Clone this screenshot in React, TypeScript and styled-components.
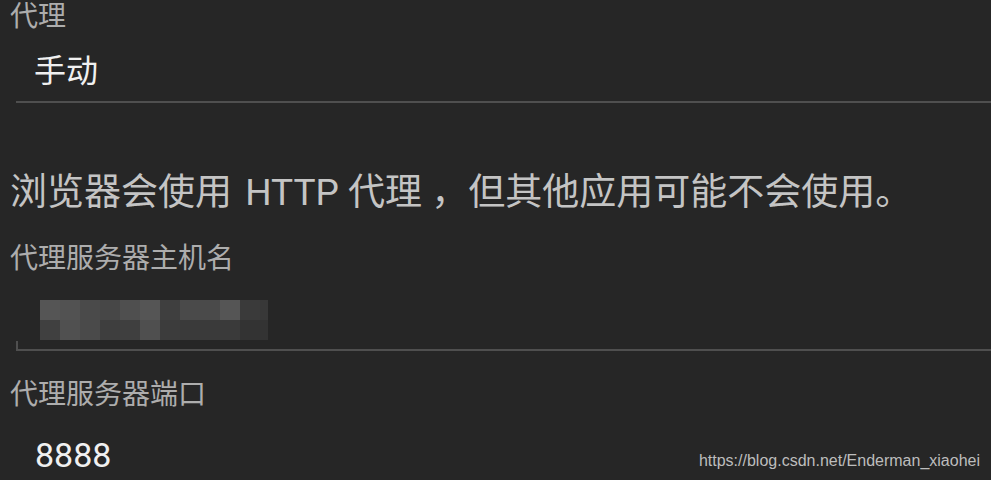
import styled, { createGlobalStyle } from 'styled-components'

const GlobalStyle = createGlobalStyle`
  html, body {
    margin: 0;
    padding: 0;
    background: #262626;
  }
  body {
    font-family: Roboto, "Noto Sans CJK SC", "Noto Sans", sans-serif;
  }
`

const mosaic = [
  ['#555555', '#525252', '#4a4a4a', '#474747', '#4f4f4f', '#555555', '#3f3f3f', '#4a4a4a', '#4a4a4a', '#555555', '#3a3a3a', '#383838'],
  ['#404040', '#505050', '#4a4a4a', '#3e3e3e', '#3f3f3f', '#4f4f4f', '#3c3c3c', '#3a3a3a', '#3a3a3a', '#3a3a3a', '#333333', '#333333'],
]

export default function App() {
  return (
    <>
      <GlobalStyle />
      <Screen>
        <Label $height={33}>代理</Label>
        <Spinner>
          <Value $size={32} $height={42}>手动</Value>
        </Spinner>
        <Notice>
          浏览器会使用 <Term>HTTP</Term> 代理 ，但其他应用可能不会使用。
        </Notice>
        <Label $height={36} $top={23}>代理服务器主机名</Label>
        <EditText>
          <Mosaic width="228" height="40" viewBox="0 0 228 40">
            {mosaic.map((row, r) =>
              row.map((fill, c) => (
                <rect key={`${r}-${c}`} x={c * 20} y={r * 20} width={c === 11 ? 8 : 20} height={20} fill={fill} />
              )),
            )}
          </Mosaic>
        </EditText>
        <Label $height={36} $top={26}>代理服务器端口</Label>
        <PortField>
          <Value $size={34} $height={44}>8888</Value>
        </PortField>
        <Watermark>https://blog.csdn.net/Enderman_xiaohei</Watermark>
      </Screen>
    </>
  )
}

const Screen = styled.div`
  position: relative;
  display: flex;
  flex-direction: column;
  width: 991px;
  height: 480px;
  padding-left: 10px;
  box-sizing: border-box;
  overflow: hidden;
`
const Label = styled.div<{ $height: number; $top?: number }>`
  margin-top: ${(p) => p.$top ?? 0}px;
  height: ${(p) => p.$height}px;
  line-height: ${(p) => p.$height}px;
  font-size: 28px;
  color: #adadad;
  white-space: nowrap;
`
const Spinner = styled.div`
  margin-left: 6px;
  padding: 17px 0 9px 18px;
  border-bottom: 2px solid #4f4f4f;
`
const Value = styled.div<{ $size: number; $height: number }>`
  font-size: ${(p) => p.$size}px;
  line-height: ${(p) => p.$height}px;
  height: ${(p) => p.$height}px;
  color: #f0f0f0;
`
const Notice = styled.div`
  margin-top: 65px;
  height: 50px;
  line-height: 50px;
  font-size: 37px;
  color: #c4c4c4;
  white-space: nowrap;
`
const Term = styled.span`
  margin-left: 4px;
`
const EditText = styled.div`
  position: relative;
  margin-left: 6px;
  padding: 23px 0 9px 24px;
  border-bottom: 2px solid #4f4f4f;
  &::before {
    content: '';
    position: absolute;
    left: 0;
    bottom: 0;
    width: 2px;
    height: 8px;
    background: #4f4f4f;
  }
`
const Mosaic = styled.svg`
  display: block;
`
const PortField = styled.div`
  margin-left: 6px;
  padding: 20px 0 0 19px;
`
const Watermark = styled.div`
  position: absolute;
  right: 11px;
  bottom: 9px;
  font-family: "Liberation Sans", Arial, sans-serif;
  font-size: 16px;
  line-height: 20px;
  color: #bdbdbd;
`
